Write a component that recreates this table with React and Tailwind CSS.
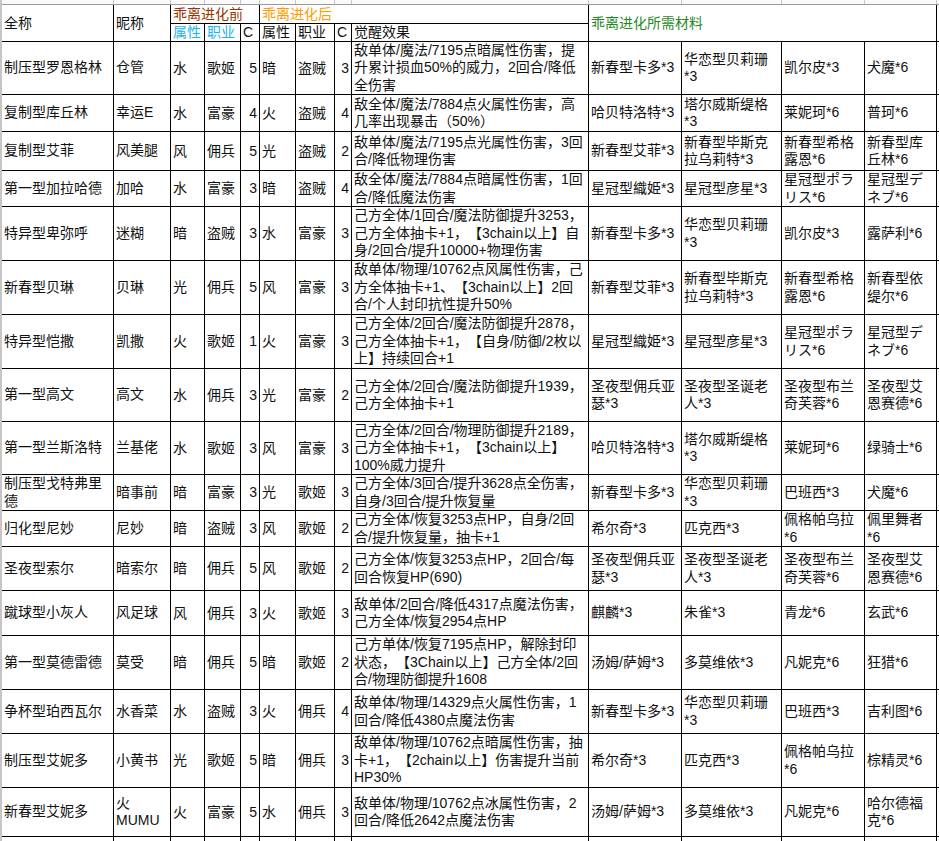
import clsx from "clsx";

const FONT = "font-['Liberation_Sans','Noto_Sans_CJK_SC',sans-serif]";
const COLS =
  "grid-cols-[111px_56px_33px_35px_18px_35px_38px_16px_236px_92px_99px_82px_71px_40px]";
const ROWS =
  "grid-rows-[18px_17px_52px_36px_38px_35px_53px_53px_53px_52px_52px_35px_35px_43px_44px_53px_43px_53px_48px_40px]";

const rows = [
  ["制压型罗恩格林", "仓管", "水", "歌姬", 5, "暗", "盗贼", 3,
    ["敌单体/魔法/7195点暗属性伤害，提", "升累计损血50%的威力，2回合/降低", "全伤害"],
    ["新春型卡多*3"], ["华恋型贝莉珊", "*3"], ["凯尔皮*3"], ["犬魔*6"]],
  ["复制型库丘林", "幸运E", "水", "富豪", 4, "火", "盗贼", 4,
    ["敌全体/魔法/7884点火属性伤害，高", "几率出现暴击（50%）"],
    ["哈贝特洛特*3"], ["塔尔威斯缇格", "*3"], ["莱妮珂*6"], ["普珂*6"]],
  ["复制型艾菲", "风美腿", "风", "佣兵", 5, "光", "盗贼", 2,
    ["敌单体/魔法/7195点光属性伤害，3回", "合/降低物理伤害"],
    ["新春型艾菲*3"], ["新春型毕斯克", "拉乌莉特*3"], ["新春型希格", "露恩*6"], ["新春型库", "丘林*6"]],
  ["第一型加拉哈德", "加哈", "水", "富豪", 3, "暗", "盗贼", 4,
    ["敌全体/魔法/7884点暗属性伤害，1回", "合/降低魔法伤害"],
    ["星冠型織姫*3"], ["星冠型彦星*3"], ["星冠型ポラ", "リス*6"], ["星冠型デ", "ネブ*6"]],
  ["特异型卑弥呼", "迷糊", "暗", "盗贼", 3, "水", "富豪", 3,
    ["己方全体/1回合/魔法防御提升3253，", "己方全体抽卡+1，【3chain以上】自", "身/2回合/提升10000+物理伤害"],
    ["新春型卡多*3"], ["华恋型贝莉珊", "*3"], ["凯尔皮*3"], ["露萨利*6"]],
  ["新春型贝琳", "贝琳", "光", "佣兵", 5, "风", "富豪", 3,
    ["敌单体/物理/10762点风属性伤害，己", "方全体抽卡+1、【3chain以上】2回", "合/个人封印抗性提升50%"],
    ["新春型艾菲*3"], ["新春型毕斯克", "拉乌莉特*3"], ["新春型希格", "露恩*6"], ["新春型依", "缇尔*6"]],
  ["特异型恺撒", "凯撒", "火", "歌姬", 1, "火", "富豪", 3,
    ["己方全体/2回合/魔法防御提升2878，", "己方全体抽卡+1，【自身/防御/2枚以", "上】持续回合+1"],
    ["星冠型織姫*3"], ["星冠型彦星*3"], ["星冠型ポラ", "リス*6"], ["星冠型デ", "ネブ*6"]],
  ["第一型高文", "高文", "水", "佣兵", 3, "光", "富豪", 2,
    ["己方全体/2回合/魔法防御提升1939，", "己方全体抽卡+1"],
    ["圣夜型佣兵亚", "瑟*3"], ["圣夜型圣诞老", "人*3"], ["圣夜型布兰", "奇芙蓉*6"], ["圣夜型艾", "恩赛德*6"]],
  ["第一型兰斯洛特", "兰基佬", "水", "歌姬", 3, "风", "富豪", 3,
    ["己方全体/2回合/物理防御提升2189，", "己方全体抽卡+1，【3chain以上】", "100%威力提升"],
    ["哈贝特洛特*3"], ["塔尔威斯缇格", "*3"], ["莱妮珂*6"], ["绿骑士*6"]],
  [["制压型戈特弗里", "德"], "暗事前", "暗", "富豪", 3, "光", "歌姬", 3,
    ["己方全体/3回合/提升3628点全伤害，", "自身/3回合/提升恢复量"],
    ["新春型卡多*3"], ["华恋型贝莉珊", "*3"], ["巴班西*3"], ["犬魔*6"]],
  ["归化型尼妙", "尼妙", "暗", "盗贼", 3, "风", "歌姬", 2,
    ["己方全体/恢复3253点HP，自身/2回", "合/提升恢复量，抽卡+1"],
    ["希尔奇*3"], ["匹克西*3"], ["佩格帕乌拉", "*6"], ["佩里舞者", "*6"]],
  ["圣夜型索尔", "暗索尔", "暗", "佣兵", 5, "风", "歌姬", 2,
    ["己方全体/恢复3253点HP，2回合/每", "回合恢复HP(690)"],
    ["圣夜型佣兵亚", "瑟*3"], ["圣夜型圣诞老", "人*3"], ["圣夜型布兰", "奇芙蓉*6"], ["圣夜型艾", "恩赛德*6"]],
  ["蹴球型小灰人", "风足球", "风", "佣兵", 3, "火", "歌姬", 3,
    ["敌单体/2回合/降低4317点魔法伤害，", "己方全体/恢复2954点HP"],
    ["麒麟*3"], ["朱雀*3"], ["青龙*6"], ["玄武*6"]],
  ["第一型莫德雷德", "莫受", "暗", "佣兵", 5, "暗", "歌姬", 2,
    ["己方单体/恢复7195点HP，解除封印", "状态，【3Chain以上】己方全体/2回", "合/物理防御提升1608"],
    ["汤姆/萨姆*3"], ["多莫维依*3"], ["凡妮克*6"], ["狂猎*6"]],
  ["争杯型珀西瓦尔", "水香菜", "水", "盗贼", 3, "火", "佣兵", 4,
    ["敌单体/物理/14329点火属性伤害，1", "回合/降低4380点魔法伤害"],
    ["新春型卡多*3"], ["华恋型贝莉珊", "*3"], ["巴班西*3"], ["吉利图*6"]],
  ["制压型艾妮多", "小黄书", "光", "歌姬", 5, "暗", "佣兵", 3,
    ["敌单体/物理/10762点暗属性伤害，抽", "卡+1，【2chain以上】伤害提升当前", "HP30%"],
    ["希尔奇*3"], ["匹克西*3"], ["佩格帕乌拉", "*6"], ["棕精灵*6"]],
  ["新春型艾妮多", ["火", "MUMU"], "火", "富豪", 5, "水", "佣兵", 3,
    ["敌单体/物理/10762点冰属性伤害，2", "回合/降低2642点魔法伤害"],
    ["汤姆/萨姆*3"], ["多莫维依*3"], ["凡妮克*6"], ["哈尔德福", "克*6"]],
];

const Cell = ({ children, className }) => (
  <div className={clsx("flex items-center overflow-hidden whitespace-nowrap bg-white px-[2px]", className)}>
    {children}
  </div>
);

// full-width brackets get a full em box, like the sheet's font
const Line = ({ text }) => (
  <span className="block">
    {text.split(/([【】])/).map((part, i) =>
      part === "【" ? (
        <span key={i} className="inline-block w-[14px] text-right">【</span>
      ) : part === "】" ? (
        <span key={i} className="inline-block w-[14px] text-left">】</span>
      ) : (
        part
      )
    )}
  </span>
);

const Lines = ({ value }) => {
  const list = Array.isArray(value) ? value : [value];
  return (
    <div className="leading-[17.5px]">
      {list.map((l, i) => (
        <Line key={i} text={l} />
      ))}
    </div>
  );
};

export default function App() {
  return (
    <div className={clsx("h-[841px] w-[939px] overflow-hidden border-l-2 border-[#c6c6c6] bg-white text-[14px] text-[#111]", FONT)}>
      {/* column header strip of the sheet, cut off */}
      <div className={clsx("grid h-[5px] gap-px border-b border-[#9a9a9a] bg-[#c8c8c8]", COLS)}>
        {Array.from({ length: 14 }).map((_, i) => (
          <div key={i} className="bg-[#fafafa]" />
        ))}
      </div>

      <div className={clsx("grid gap-px bg-black", COLS, ROWS)}>
        {/* header */}
        <Cell className="row-span-2">全称</Cell>
        <Cell className="row-span-2">昵称</Cell>
        <Cell className="col-span-3 text-[#993300]">乖离进化前</Cell>
        <Cell className="col-span-4 text-[#ff9900]">乖离进化后</Cell>
        <Cell className="col-span-4 row-span-2 text-[#1f8a1f]">乖离进化所需材料</Cell>
        <Cell className="row-span-2" />
        <Cell className="text-[#20b4ef]">属性</Cell>
        <Cell className="text-[#20b4ef]">职业</Cell>
        <Cell>C</Cell>
        <Cell>属性</Cell>
        <Cell>职业</Cell>
        <Cell>C</Cell>
        <Cell>觉醒效果</Cell>

        {/* data rows */}
        {rows.map((r, i) => (
          <div key={i} className="contents">
            <Cell><Lines value={r[0]} /></Cell>
            <Cell><Lines value={r[1]} /></Cell>
            <Cell>{r[2]}</Cell>
            <Cell>{r[3]}</Cell>
            <Cell className="justify-end">{r[4]}</Cell>
            <Cell>{r[5]}</Cell>
            <Cell>{r[6]}</Cell>
            <Cell className="justify-end">{r[7]}</Cell>
            <Cell><Lines value={r[8]} /></Cell>
            <Cell><Lines value={r[9]} /></Cell>
            <Cell><Lines value={r[10]} /></Cell>
            <Cell><Lines value={r[11]} /></Cell>
            <Cell><Lines value={r[12]} /></Cell>
            <Cell />
          </div>
        ))}

        {/* next row, cut off at the bottom */}
        {Array.from({ length: 14 }).map((_, i) => (
          <Cell key={"last" + i} />
        ))}
      </div>
    </div>
  );
}
